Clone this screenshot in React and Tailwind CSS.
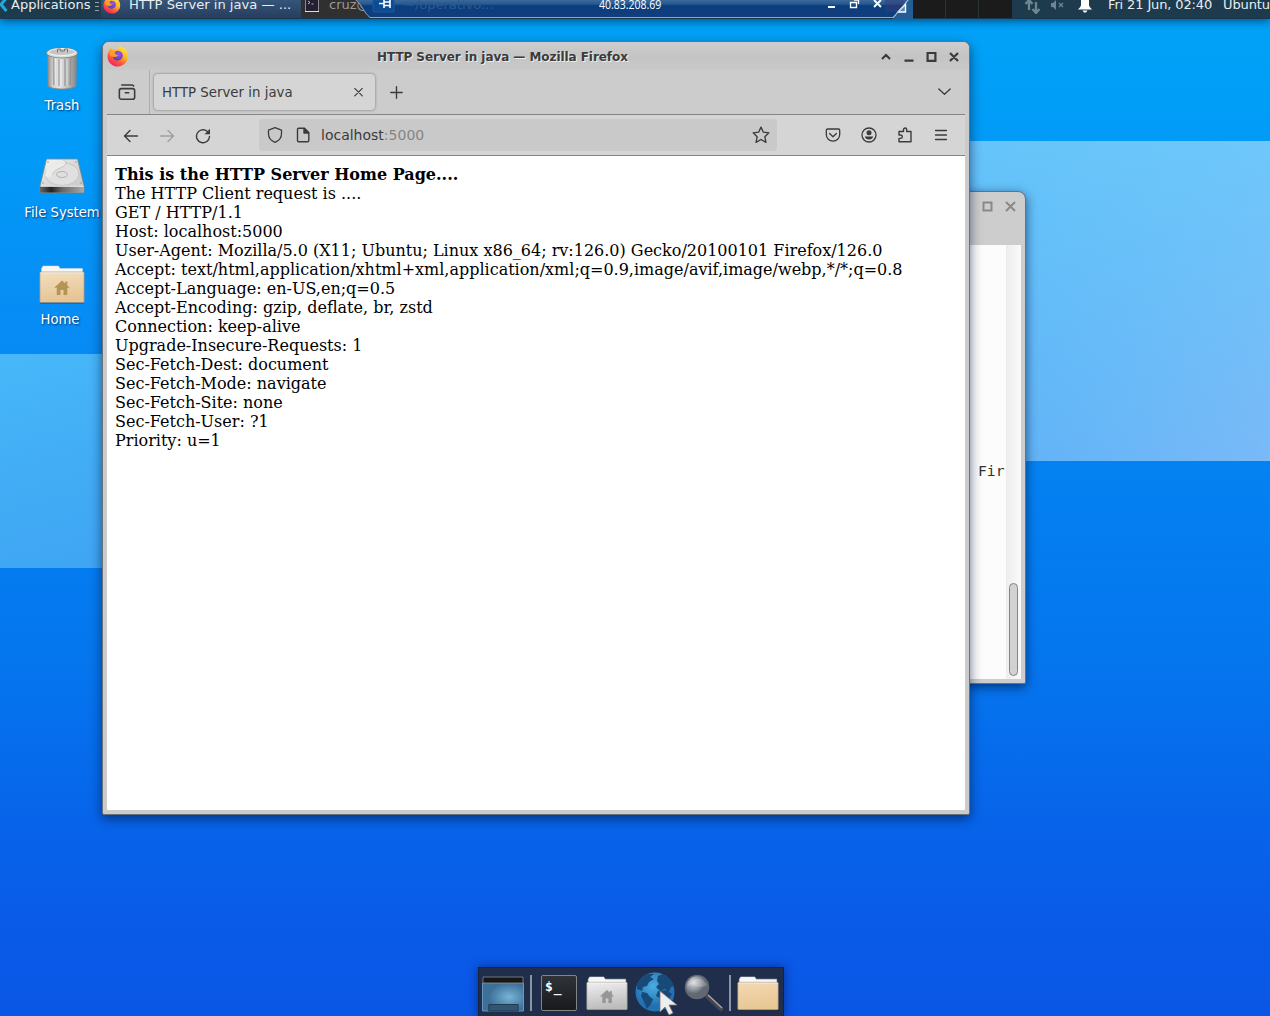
import React from "react";

const SANS = "font-['DejaVu_Sans',sans-serif]";

function FirefoxLogo({ className }) {
  return (
    <svg className={className} viewBox="0 0 22 22">
      <defs>
        <linearGradient id="ffOuter" x1="0.85" y1="0.05" x2="0.25" y2="1">
          <stop offset="0" stopColor="#fff044" />
          <stop offset="0.4" stopColor="#ffb02b" />
          <stop offset="0.68" stopColor="#ff5a36" />
          <stop offset="1" stopColor="#e91e68" />
        </linearGradient>
        <radialGradient id="ffCore" cx="0.6" cy="0.3" r="0.8">
          <stop offset="0" stopColor="#9a55ea" />
          <stop offset="1" stopColor="#4a3fae" />
        </radialGradient>
      </defs>
      <path d="M2.2 5.8 3.4 3 5 4.8C6.200 4.200 7.600 4 9 4.600c2-.5 3.200-1.700 3.800-4.200 1.300.7 2.500 2 3.200 3.200L16.800 2.300c.8 1.400 2.600 2.900 3.400 5C23 14 18.300 21.500 11 21.500 4.800 21.500.5 16.800.5 11.400c0-2.200.7-4.200 1.700-5.600z" fill="url(#ffOuter)" />
      <path d="M8.500 6.300c2.600-1.200 5.400-.3 6.700 2 1.700 3.400-.8 7.200-4.400 7.200-3.200 0-5-2.200-4.700-4.300 1 .9 2 1 3.300.4 1-.5 1.800-.4 2.200-.9-.7-.9-2.700-.7-3.400-1.700-.3-.8 0-1.900.3-2.700z" fill="url(#ffCore)" />
      <path d="M2.700 7.300c1.500-1.500 3.500-1.800 5.800-.6-.8.700-1.100 1.300-.9 2.100.8 1.100 2.600.7 3.200 1.700-.5.9-1.300.6-2.300 1.200-1 .5-1.800.4-2.800-.1C3.500 11.700 2 9.800 2.700 7.300z" fill="#ff9a2e" />
    </svg>
  );
}

function Line({ className, children, sw = 1.4 }) {
  return (
    <svg className={className} viewBox="0 0 16 16" fill="none" stroke="currentColor" strokeWidth={sw} strokeLinecap="round" strokeLinejoin="round">
      {children}
    </svg>
  );
}

function Folder({ id, from, to, home, className }) {
  return (
    <svg className={className} viewBox="0 0 46 40" preserveAspectRatio="none">
      <defs>
        <linearGradient id={id} x1="0" y1="0" x2="0.2" y2="1">
          <stop offset="0" stopColor={from} />
          <stop offset="1" stopColor={to} />
        </linearGradient>
      </defs>
      <path d="M2.500 10V3.500L4 1h15.500L21 3.500h22.500V10z" fill="#f7f7f7" stroke="#d4dce2" strokeWidth=".5" />
      <rect x=".9" y="7" width="44.200" height="30.500" rx="1" fill={`url(#${id})`} stroke="#9b9282" strokeWidth=".7" />
      <path d="M1.500 7.800h43" stroke="#fff" strokeOpacity=".6" />
      <path d="M1 38.300h44" stroke="#000" strokeOpacity=".25" />
      {home && <path d="M23 15.500l-7.800 7.300h2.600V30h3.700v-5h3v5h3.800v-7.200h2.500l-2.500-2.400v-3.800h-2v1.900z" fill={home} />}
    </svg>
  );
}

function TrashIcon() {
  return (
    <svg className="h-[44px] w-[34px]" viewBox="0 0 34 44">
      <defs>
        <linearGradient id="can" x1="0" x2="1">
          <stop offset="0" stopColor="#888" />
          <stop offset=".18" stopColor="#d0d0d0" />
          <stop offset=".42" stopColor="#e4e4e4" />
          <stop offset=".7" stopColor="#bbb" />
          <stop offset="1" stopColor="#858585" />
        </linearGradient>
      </defs>
      <path d="M2.500 7l.5 33c3 4 25 4 28 0l.5-33z" fill="url(#can)" stroke="#858585" strokeWidth=".8" />
      <path d="M8.500 12l.3 27M14 13v27M20 13v27M25.500 12l-.3 27" stroke="#888" strokeWidth="1.600" opacity=".6" />
      <path d="M10.500 12l.3 27M16 13v27M22 13v27" stroke="#fff" opacity=".45" />
      <ellipse cx="17" cy="7" rx="15.700" ry="5" fill="#dcdedc" stroke="#777" strokeWidth=".8" />
      <ellipse cx="17" cy="6" rx="13.500" ry="3.500" fill="#c5c7c5" stroke="#f2f2f2" />
      <path d="M12.500 6.500V3h3v2h4V3h3v3.500" fill="none" stroke="#777" strokeWidth="1" />
    </svg>
  );
}

function DriveIcon() {
  return (
    <svg className="h-[36px] w-[46px]" viewBox="0 0 46 36">
      <defs>
        <linearGradient id="drv" x1="0" y1="0" x2="1" y2="1">
          <stop offset="0" stopColor="#ececeb" />
          <stop offset="1" stopColor="#c4c6c4" />
        </linearGradient>
        <linearGradient id="drvFront" x1="0" x2="1">
          <stop offset="0" stopColor="#666" />
          <stop offset=".25" stopColor="#222" />
          <stop offset=".5" stopColor="#666" />
          <stop offset="1" stopColor="#aaa" />
        </linearGradient>
      </defs>
      <path d="M7.500 1h31L45 28v6.500H1V28z" fill="url(#drv)" stroke="#858785" strokeWidth=".8" />
      <ellipse cx="23" cy="16" rx="17" ry="11.500" fill="#dfe0df" stroke="#bcbebc" strokeWidth=".8" />
      <path d="M8 2h15c4 1 5 4 2 6-5 3-9 2-12 9-2 3-5 3-7 1z" fill="#efefee" opacity=".8" />
      <path d="M24 2c4 1 4 4 1 6-5 3-9 3-12 9" fill="none" stroke="#bdbfbd" strokeWidth=".8" />
      <ellipse cx="23" cy="16.500" rx="5.500" ry="3" fill="#dedfde" stroke="#a4a6a4" strokeWidth=".8" />
      <path d="M1 28h44v6.500H1z" fill="url(#drvFront)" />
      <path d="M1.500 28.300h43" stroke="#eee" />
      <g fill="#8a8c8a"><circle cx="9" cy="4" r=".7" /><circle cx="37" cy="4" r=".7" /><circle cx="4" cy="25" r=".7" /><circle cx="42" cy="25" r=".7" /></g>
    </svg>
  );
}

function DesktopIcon({ label, children, className }) {
  return (
    <div className={`absolute flex flex-col items-center ${className}`}>
      {children}
      <span className="mt-[9px] whitespace-nowrap text-[13.200px] leading-[16px] text-white [text-shadow:1px_1px_2px_#00336b]">{label}</span>
    </div>
  );
}

function TopPanel() {
  return (
    <div className="absolute left-0 top-0 flex h-[19px] w-full border-b border-[#17384c] bg-[#1d3b4d] text-[13px] text-[#e8eef1] shadow-[0_2px_10px_rgba(0,30,70,0.65)]">
      <div className="flex w-[101px] shrink-0">
        <svg className="h-[18px] w-[11px] shrink-0" viewBox="0 0 11 18"><path d="M6.500-2L1 4.500 6.500 11" fill="none" stroke="#20a7dc" strokeWidth="3" /></svg>
        <span className="-mt-[3px] h-4 w-[84px] whitespace-nowrap leading-4">Applications</span>
        <svg className="h-3 w-1" viewBox="0 0 4 12"><path d="M0 2.500h4M0 6.500h4M0 10.500h4" stroke="#91a4ae" strokeWidth="1" /></svg>
      </div>
      <div className="flex w-[200px] shrink-0 bg-linear-to-b from-[#365579] to-[#263e5e]">
        <FirefoxLogo className="-mt-[4px] ml-[2px] h-[18px] w-[18px]" />
        <span className="-mt-[3px] ml-[8px] whitespace-pre text-[13.100px] leading-4">HTTP Server in java — ...</span>
      </div>
      <div className="flex w-[612px] shrink-0 bg-[#303030]">
        <svg className="ml-1 h-[13px] w-[14px]" viewBox="0 0 14 13"><path d="M.5-3h13v14.500H.5z" fill="#241f31" stroke="#8d8d91" /><path d="M0 11.500h14" stroke="#ddd" /><path d="M3 1l2 1.500L3 4M6.500 4h2" fill="none" stroke="#ddd" strokeWidth=".8" /></svg>
        <span className="-mt-[3px] ml-[10px] whitespace-nowrap leading-4 text-[#9b9b9b]">cruz@</span>
      </div>
      <div className="grid w-[99px] shrink-0 grid-cols-3 divide-x divide-[#29332f] bg-[#1b1b1b]"><i /><i /><i /></div>
      <div className="flex flex-1">
        <svg className="ml-[12px] h-[14px] w-[18px] shrink-0" viewBox="0 0 18 14"><path d="M5 10V1M1.500 4L5 0l3.500 4M12 2v10M8.500 9l3.500 4 3.500-4" fill="none" stroke="#718590" strokeWidth="2.300" /></svg>
        <svg className="ml-[9px] h-[11px] w-[13px] shrink-0" viewBox="0 0 13 11"><path d="M0 3h2l3-3v10L2 7H0z" fill="#718590" /><path d="M8 3l4 4M12 3L8 7" stroke="#718590" strokeWidth="1.200" /></svg>
        <svg className="ml-[14px] h-[13px] w-[14px] shrink-0" viewBox="0 0 14 13"><path d="M3-1h8v6c0 2 2 3 3 4.500H0c1-1.500 3-2.500 3-4.500z" fill="#fff" /><path d="M4.500 10.500h5L8 12.500H6z" fill="#fff" /></svg>
        <span className="-mt-[3px] ml-[16px] w-[115px] shrink-0 whitespace-nowrap leading-4 tracking-[-0.13px]">Fri 21 Jun, 02:40</span>
        <span className="-mt-[3px] whitespace-nowrap leading-4 tracking-[-0.1px]">Ubuntu</span>
      </div>
    </div>
  );
}

function ConnectionBar() {
  return (
    <div className="absolute left-[355px] top-0 h-[19px] w-[558px]">
      <svg className="absolute inset-0 h-[19px] w-[558px]" viewBox="0 0 558 19">
        <defs><linearGradient id="bar" x1="0" y1="0" x2="0" y2="1"><stop offset="0" stopColor="#416d9e" /><stop offset=".28" stopColor="#265990" /><stop offset=".36" stopColor="#0b3e7f" /><stop offset="1" stopColor="#123d7b" /></linearGradient></defs>
        <path d="M538 19h20V0h-20z" fill="#245d94" />
        <path d="M-.5-1C6 3 9 13 15 17.500h523L554-1z" fill="url(#bar)" stroke="#8fa8bd" />
        <path d="M18 0h21v12H18z" fill="#0d4b92" stroke="#195a9b" />
        <path d="M24 3.500h5M29 0v8M29 2h6M29 5.500h6M35 0v8" stroke="#fff" strokeWidth="1.600" fill="none" />
        <path d="M530 0h20v12h-20z" fill="#373978" opacity=".5" />
        <path d="M473 7h7" stroke="#fff" strokeWidth="2" />
        <path d="M495.500 2.500h6v5h-6zM499 0h4.500v4" fill="none" stroke="#fff" strokeWidth="1.300" />
        <path d="M519 0l7 7M526 0l-7 7" stroke="#fff" strokeWidth="1.900" />
        <path d="M550.500 4v8h-7.500z" fill="#5a87ba" stroke="#fff" strokeWidth="1.400" />
        <path d="M538 18L554-1" stroke="#b4c4d0" />
      </svg>
      <div className="relative -mt-[3px] flex whitespace-nowrap text-[13px] leading-4">
        <span className="ml-[49px] w-[195px] text-[#2e5a8b]">~/operativo...</span>
        <span className="inline-block origin-left scale-x-[0.875] font-['Open_Sans',sans-serif] text-[12px] text-white">40.83.208.69</span>
      </div>
    </div>
  );
}

const lines = [
  "The HTTP Client request is ....",
  "GET / HTTP/1.1",
  "Host: localhost:5000",
  "User-Agent: Mozilla/5.0 (X11; Ubuntu; Linux x86_64; rv:126.0) Gecko/20100101 Firefox/126.0",
  "Accept: text/html,application/xhtml+xml,application/xml;q=0.9,image/avif,image/webp,*/*;q=0.8",
  "Accept-Language: en-US,en;q=0.5",
  "Accept-Encoding: gzip, deflate, br, zstd",
  "Connection: keep-alive",
  "Upgrade-Insecure-Requests: 1",
  "Sec-Fetch-Dest: document",
  "Sec-Fetch-Mode: navigate",
  "Sec-Fetch-Site: none",
  "Sec-Fetch-User: ?1",
  "Priority: u=1",
];

function Browser() {
  return (
    <div className="absolute left-[102px] top-[41px] flex h-[774px] w-[868px] flex-col overflow-hidden rounded-t-[7px] rounded-b-[2px] border border-[#68727a] bg-[#cbcbcb] text-[#3b3b3b] shadow-[0_4px_12px_rgba(0,20,60,0.6)]">
      <div className="flex h-[28px] shrink-0 items-center bg-linear-to-b from-[#cdcdcd] via-[#c4c4c4] to-[#c9c9c9] pl-[4px]">
        <FirefoxLogo className="h-[22px] w-[22px]" />
        <span className="ml-[248px] w-[504px] whitespace-nowrap pt-[2px] text-[12px] font-bold tracking-[-0.06px] [text-shadow:1px_1px_0_#eee]">HTTP Server in java — Mozilla Firefox</span>
        <svg className="mt-[2px] h-[12px] w-[84px]" viewBox="0 0 84 12" fill="none" stroke="#3b3b3b" strokeWidth="2.200"><path d="M1 8l4-4 4 4M23.500 9.700h9M46.600 2h7.800v7.800h-7.800zM69 2l8 8M77 2l-8 8" /></svg>
      </div>
      <div className="mx-[4px] flex h-[45px] shrink-0 border-b border-[#858585] bg-[#cccccc]">
        <div className="flex w-[43px] items-center justify-center border-r border-[#acacac] pr-[2px]">
          <Line className="h-[18px] w-[18px]"><rect x="1.200" y="5" width="13.600" height="9.500" rx="1.800" /><path d="M3.300 1.700h9.400c.8 0 1 .3 1.200.9M6.500 8.700h3" /></Line>
        </div>
        <div className="ml-[4px] mt-[4px] flex h-[36px] w-[221px] items-center justify-between rounded-[4px] bg-[#d5d5d5] pl-[8px] pr-[11px] shadow-[0_0_3px_#777]">
          <span className="whitespace-nowrap pt-px text-[13.333px]">HTTP Server in java</span>
          <Line className="h-[11px] w-[11px]" sw={1.7}><path d="M2.500 2l11 11M13.500 2l-11 11" /></Line>
        </div>
        <Line className="ml-[15px] mt-[16px] h-[13px] w-[13px]" sw={1.7}><path d="M8 1v14M1 8h14" /></Line>
        <Line className="ml-auto mr-[14px] mt-[15px] h-[13px] w-[13px]" sw={1.6}><path d="M1 5l7 6.500L15 5" /></Line>
      </div>
      <div className="mx-[4px] flex h-[41px] shrink-0 items-center border-b border-[#858585] bg-[#d5d5d5]">
        <Line className="ml-[16px] mt-px h-4 w-4"><path d="M14.500 8H1.500M7 2.500L1.500 8 7 13.500" /></Line>
        <Line className="ml-[20px] mt-px h-4 w-4 text-[#a0a0a0]"><path d="M1.500 8h13M9 2.500l5.500 5.500L9 13.500" /></Line>
        <Line className="ml-[20px] mt-px h-4 w-4"><path d="M14.500 8.500A6.500 6.500 0 1 1 12.200 3.300L14 5" /><path d="M15 .7v5.500H9.500z" fill="currentColor" stroke="none" /></Line>
        <div className="ml-[48px] flex h-[32px] w-[518px] items-center rounded-[4px] bg-[#c9c9c9] pl-[8px] pr-[7px]">
          <Line className="h-4 w-4" sw={1.300}><path d="M8 .7l6.500 2.500v3.600c0 4-2.500 7-6.500 8.500-4-1.500-6.500-4.500-6.500-8.500V3.200z" /></Line>
          <Line className="ml-[12px] h-4 w-4" sw={1.400}><path d="M2.500 2.500c0-.8.500-1.300 1.300-1.300H9.500l4.300 4.300v8c0 .8-.5 1.300-1.300 1.300H3.800c-.8 0-1.300-.5-1.300-1.300z" /><path d="M9 1.500V6h4.500z" fill="currentColor" /></Line>
          <span className="ml-[10px] pt-px text-[14px]">localhost<span className="text-[#858585]">:5000</span></span>
          <Line className="ml-auto h-[18px] w-[18px]" sw={1.200}><path d="M8 1l2.100 4.500 4.900.6-3.600 3.400 1 5L8 12l-4.400 2.500 1-5L1 6.100l4.900-.6z" /></Line>
        </div>
        <Line className="ml-[48px] h-4 w-4" sw={1.300}><path d="M2.500 2h11c.7 0 1.200.5 1.200 1.200V7.500a6.700 6.700 0 0 1-13.400 0V3.200c0-.7.500-1.200 1.200-1.200zM4.600 6.500L8 9.700l3.400-3.200" /></Line>
        <Line className="ml-[20px] h-4 w-4" sw={1.300}><circle cx="8" cy="8" r="7" /><circle cx="8" cy="5.800" r="2.500" fill="currentColor" stroke="none" /><path d="M3.800 9.600h8.400c-.4 1.900-2.100 3-4.200 3s-3.800-1.100-4.200-3z" fill="currentColor" stroke="none" /></Line>
        <Line className="ml-[20px] h-4 w-4"><path d="M2 8V4.500h4.500V2.600a1.600 1.600 0 0 1 3.200 0v1.900H14v10.300H2v-3.400h1.500c2.400 0 2.400-3.400 0-3.400z" /></Line>
        <Line className="ml-[20px] h-4 w-4" sw={1.300}><path d="M2.500 3.500h11M2.500 8h11M2.500 12.500h11" /></Line>
      </div>
      <div className="mx-[4px] mb-[4px] flex-1 bg-white pl-[8px] pt-[9px] font-['DejaVu_Serif',serif] text-[16px] leading-[19px] text-black">
        <b className="block">This is the HTTP Server Home Page....</b>
        {lines.map((line) => <div className="whitespace-nowrap" key={line}>{line}</div>)}
      </div>
    </div>
  );
}

function TerminalWindow() {
  return (
    <div className="absolute left-[900px] top-[191px] flex h-[493px] w-[126px] flex-col rounded-t-[8px] rounded-b-[2px] border border-[#68727a] bg-[#cdcdcd] shadow-[0_3px_11px_rgba(0,20,60,0.65)]">
      <div className="flex h-[53px] shrink-0 justify-end pr-[7px] pt-[8px]">
        <svg className="h-[14px] w-[36px]" viewBox="0 0 36 14" fill="none" stroke="#898989" strokeWidth="2"><path d="M1.500 2.500h8v8h-8zM24 2l9 9M33 2l-9 9" /></svg>
      </div>
      <div className="mb-[4px] mr-[4px] flex flex-1 bg-[#fcfcfc]">
        <div className="flex w-[105px] items-start pl-[77px] pt-[218px] font-['DejaVu_Sans_Mono',monospace] text-[14.667px] leading-4 text-[#333]">Fir</div>
        <div className="flex flex-1 items-end justify-center bg-linear-to-r from-[#ededed] to-[#fafafa] pb-[3px]"><div className="h-[93px] w-[9px] rounded-full border border-[#858585] bg-[#d2d2d2]" /></div>
      </div>
    </div>
  );
}

function Dock() {
  return (
    <div className="absolute left-[478px] top-[967px] flex h-[50px] w-[306px] items-start border border-[#17233e] bg-[#202e4c] pl-[3px] pt-[4px] shadow-[0_0_9px_rgba(0,20,80,0.6)]">
      <svg className="mt-[4px] h-[38px] w-[42px]" viewBox="0 0 43 38" preserveAspectRatio="none"><defs><radialGradient id="desk" cx=".65" cy=".5"><stop stopColor="#77b4d5" /><stop offset="1" stopColor="#3d7099" /></radialGradient></defs><path d="M.5 7h42v28H.5z" fill="url(#desk)" stroke="#629ac1" /><path d="M1 1h41v6H1z" fill="#171717" stroke="#73777d" /><path d="M7 35v-6.500h30V35z" fill="#315674" stroke="#25394f" /></svg>
      <i className="ml-[6px] mt-[3px] h-[36px] w-[2px] bg-[#8b94a4]" />
      <div className="ml-[9px] mt-[3px] h-[36px] w-[36px] rounded-[2px] border border-[#83857f] bg-linear-to-b from-[#303337] to-[#181a1d] pl-[3px] pt-[3px] font-['DejaVu_Sans_Mono',monospace] text-[13px] font-bold leading-4 text-white">$<span className="relative top-[1px] ml-[1px]">_</span></div>
      <Folder id="dockHome" from="#f0f0f0" to="#bcbcbc" home="#969696" className="ml-[9px] mt-[4px] h-[36px] w-[42px]" />
      <svg className="ml-[7px] h-[43px] w-[44px]" viewBox="0 0 44 43"><defs><radialGradient id="sea" cx=".45" cy=".35"><stop stopColor="#4cade0" /><stop offset="1" stopColor="#2272b2" /></radialGradient></defs><circle cx="20" cy="20" r="19.500" fill="url(#sea)" /><path d="M2 12C6 4 13 1 19 2l-4 3 4 2-5 3-2 4-4 1-1 4-5-2zM7 20l5 1 3 4 3 2-2 5-4 5-3-7-3-6zM23 4l5-2 7 5 4 7-3 1-2 5-4-3-5 2-4-4 3-3-2-3zM23 19l8-1 6 4-4 7-4 4-4-7-4-2z" fill="#174a78" /><path d="M25 19v21l5-5 4 8 4-2-4-8h8z" fill="#eee" stroke="#777" strokeWidth=".8" /></svg>
      <svg className="ml-[5px] mt-[2px] h-[40px] w-[40px]" viewBox="0 0 40 40"><defs><radialGradient id="lens" cx=".35" cy=".3"><stop stopColor="#d8dadd" /><stop offset=".6" stopColor="#969ba3" /><stop offset="1" stopColor="#626872" /></radialGradient></defs><path d="M22 21L37 35" stroke="#44464c" strokeWidth="4.500" strokeLinecap="round" /><path d="M24 21L38 34" stroke="#aaa" strokeWidth="1.200" /><circle cx="13" cy="13" r="11.500" fill="url(#lens)" stroke="#626870" strokeWidth="1.500" /><path d="M3 12c4-8 16-10 20-1-6 5-14-2-20 1z" fill="#fff" opacity=".2" /></svg>
      <i className="ml-[5px] mt-[3px] h-[36px] w-[2px] bg-[#8b94a4]" />
      <Folder id="dockFolder" from="#f4d9b2" to="#e8c795" className="ml-[6px] mt-[4px] h-[36px] w-[42px]" />
    </div>
  );
}

export default function App() {
  return (
    <main className={`relative h-[1016px] w-[1270px] overflow-hidden bg-[linear-gradient(180deg,#00a4f8_0%,#019bf7_14%,#078cf5_32%,#0482f2_45%,#0576ee_65%,#0765ea_80%,#0a5ae8_92%,#0a57e6_100%)] ${SANS}`}>
      <div className="absolute left-0 top-[354px] h-[214px] w-[110px] bg-[linear-gradient(165deg,#48b8fa,#42adf5_50%,#3fa5f4)]" />
      <div className="absolute left-[960px] top-[141px] h-[320px] w-[310px] bg-[linear-gradient(110deg,#52aff6,#66b5f7_55%,#7ab9f7)]">
        <div className="h-full bg-linear-to-b from-[#6fd0fc]/65 to-transparent" />
      </div>
      <DesktopIcon label="Trash" className="left-[37px] top-[46px] w-[50px]"><div className="-mb-px"><TrashIcon /></div></DesktopIcon>
      <DesktopIcon label="File System" className="left-[12px] top-[158px] w-[100px]"><div className="mb-[2px]"><DriveIcon /></div></DesktopIcon>
      <DesktopIcon label="Home" className="left-[33px] top-[265px] w-[54px]"><Folder id="deskHome" from="#f3dfbd" to="#e6c495" home="#b69456" className="-mb-[2px] ml-[4px] h-[40px] w-[46px]" /></DesktopIcon>
      <TerminalWindow />
      <Browser />
      <TopPanel />
      <ConnectionBar />
      <Dock />
    </main>
  );
}
